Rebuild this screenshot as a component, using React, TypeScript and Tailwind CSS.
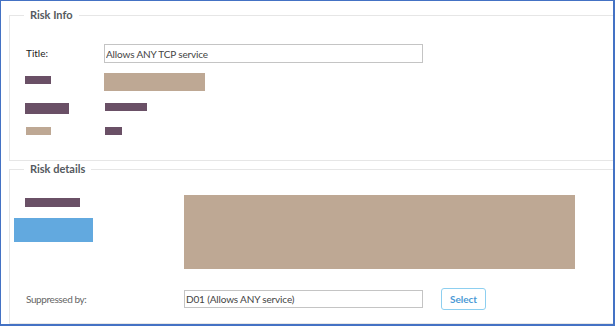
import React from 'react';

const font = { fontFamily: 'Lato, "Liberation Sans", sans-serif' };

const RiskForm = () => {
  return (
    <div
      className="w-[615px] h-[326px] overflow-hidden bg-white border-l border-t border-r-2 border-b-2 border-[#4472c4]"
      style={font}
    >
      <fieldset className="mt-[6px] ml-2 mr-[-4px] border border-[#e6e6e6] pb-[25px]">
        <legend className="ml-[14px] px-[6px] text-[11px] leading-4 font-bold text-[#555a60]">
          Risk Info
        </legend>
        <div className="flex flex-col pl-[15px]">
          <div className="mt-[21px] flex items-center h-[19px]">
            <label className="w-[79px] pl-px text-[10px] text-[#222]">Title:</label>
            <input
              type="text"
              defaultValue="Allows ANY TCP service"
              className="w-[319px] h-[19px] border border-[#c4c4c4] px-px text-[10px] tracking-[-0.15px] text-[#444] outline-none"
            />
          </div>
          <div className="mt-[10px] flex items-start h-[18px]">
            <div className="w-[79px]">
              <div className="mt-[3px] w-[26px] h-[8px] bg-[#6a5066]" />
            </div>
            <div className="w-[101px] h-[18px] bg-[#bea894]" />
          </div>
          <div className="mt-[12px] flex items-start h-[11px]">
            <div className="w-[80px]">
              <div className="w-[44px] h-[11px] bg-[#6a5066]" />
            </div>
            <div className="w-[42px] h-[8px] bg-[#6a5066]" />
          </div>
          <div className="mt-[13px] flex items-start h-[8px]">
            <div className="w-[80px] pl-px">
              <div className="w-[25px] h-[8px] bg-[#bea894]" />
            </div>
            <div className="w-[17px] h-[8px] bg-[#6a5066]" />
          </div>
        </div>
      </fieldset>

      <fieldset className="ml-2 mr-[-4px] border border-[#e6e6e6] pb-[13px]">
        <legend className="ml-[14px] px-[6px] text-[11px] leading-4 font-bold text-[#555a60]">
          Risk details
        </legend>
        <div className="flex">
          <div className="w-[174px] flex flex-col">
            <div className="mt-[21px] ml-[15px] w-[55px] h-[9px] bg-[#6a5066]" />
            <div className="mt-[11px] ml-[4px] w-[79px] h-[24px] bg-[#62a9df]" />
          </div>
          <div className="mt-[18px] w-[391px] h-[74px] bg-[#bea894]" />
        </div>
        <div className="mt-[19px] flex items-center h-[22px] pl-[16px]">
          <label className="w-[158px] text-[10px] tracking-[-0.4px] text-[#666]">Suppressed by:</label>
          <input
            type="text"
            defaultValue="D01 (Allows ANY service)"
            className="w-[239px] h-[18px] border border-[#c4c4c4] px-px text-[10px] tracking-[-0.15px] text-[#444] outline-none"
          />
          <button
            type="button"
            className="ml-[18px] w-[45px] h-[22px] rounded-[3px] border border-[#8dcff0] text-[10px] font-bold text-[#4c9ad6] bg-white"
          >
            Select
          </button>
        </div>
      </fieldset>
    </div>
  );
};

export default function App() {
  return <RiskForm />;
}
